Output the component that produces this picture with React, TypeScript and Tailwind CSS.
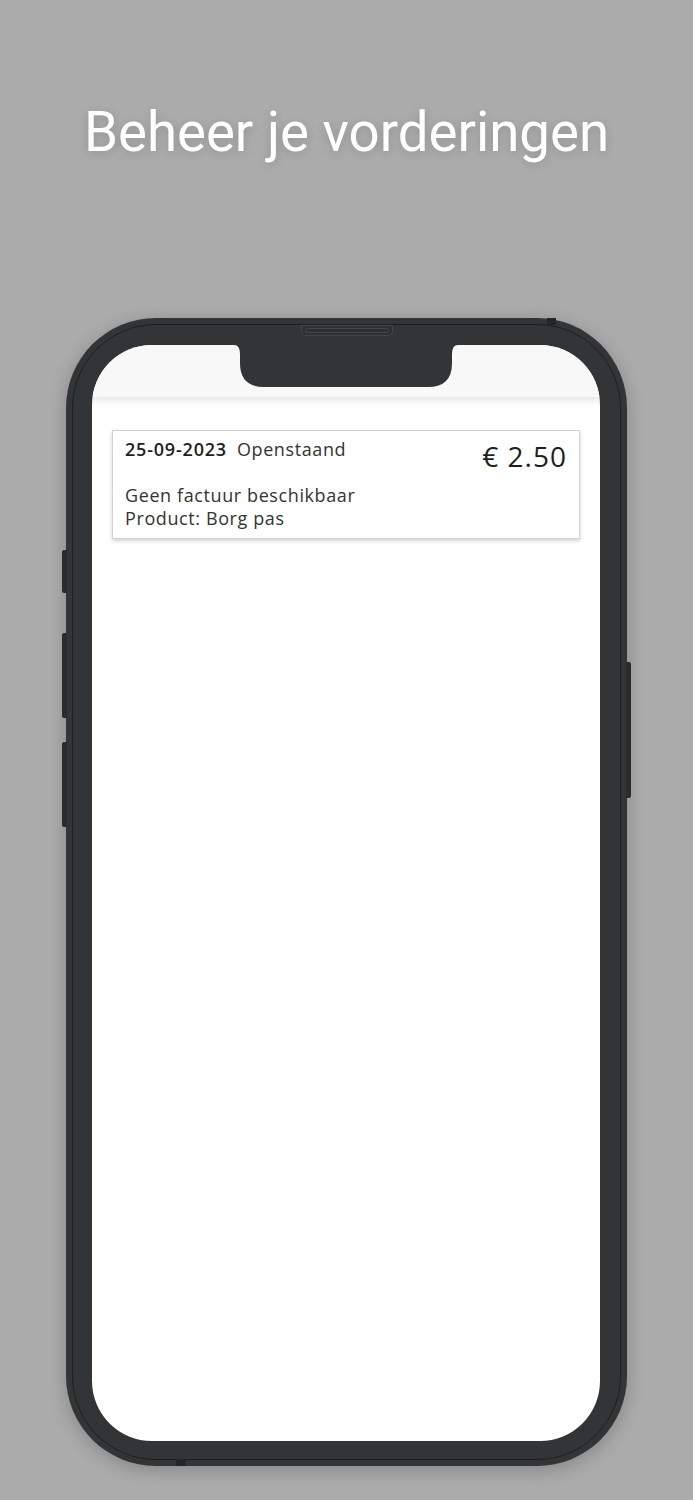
import React from 'react';

const SideButton = ({ className }: { className: string }) => (
  <div className={`absolute w-[5px] bg-[#2a2b2d] ${className}`} />
);

const Notch = () => (
  <svg className="absolute left-1/2 top-0 -translate-x-1/2" width="224" height="43" viewBox="0 0 224 43">
    <path d="M0 0 H224 Q218 0 218 9 V18 Q218 42 194 42 H30 Q6 42 6 18 V9 Q6 0 0 0 Z" fill="#333436" />
  </svg>
);

const Vordering: React.FC<{ datum: string; status: string; bedrag: string; regels: string[] }> = ({ datum, status, bedrag, regels }) => (
  <div className="mx-5 mt-[33px] border border-[#d2d2d2] bg-white px-[12px] pt-[6px] pb-[8px] shadow-[0_2px_4px_rgba(0,0,0,0.18)] font-['Open_Sans',sans-serif] tracking-[0.6px]">
    <div className="flex items-start justify-between">
      <div className="flex items-baseline gap-[10px] text-[18px] leading-[24px]">
        <span className="font-semibold tracking-[0.8px] text-[#1f1f1f]">{datum}</span>
        <span className="text-[#333]">{status}</span>
      </div>
      <span className="mt-[3px] text-[28px] leading-[32px] tracking-[1px] text-[#1f1f1f]">{bedrag}</span>
    </div>
    <div className="mt-[12px] text-[18px] leading-[23px] text-[#333]">
      {regels.map((r) => <div key={r}>{r}</div>)}
    </div>
  </div>
);

export default function App() {
  return (
    <div className="flex h-[1500px] w-full flex-col items-center bg-[#ababab] overflow-hidden">
      <h1 className="mt-[100px] font-['Roboto',sans-serif] text-[54.6px] leading-[64px] text-white [text-shadow:0_2px_10px_rgba(0,0,0,0.15)]">
        Beheer je vorderingen
      </h1>

      {/* telefoon */}
      <div className="relative mt-[154px] flex h-[1148px] w-[561px] flex-col rounded-[90px] bg-[#333436] pt-[27px] pr-[27px] pb-[25px] pl-[26px] shadow-[0_4px_18px_rgba(0,0,0,0.22)]">
        <div className="pointer-events-none absolute inset-[6px] rounded-[84px] border border-[#1e1f21]" />
        <SideButton className="-left-[4px] top-[232px] h-[43px] rounded-l-[2px]" />
        <SideButton className="-left-[4px] top-[315px] h-[85px] rounded-l-[2px]" />
        <SideButton className="-left-[4px] top-[424px] h-[85px] rounded-l-[2px]" />
        <SideButton className="-right-[4px] top-[344px] h-[136px] rounded-r-[2px]" />
        <div className="absolute left-[481px] top-0 h-[7px] w-[9px] bg-[#242527]" />
        <div className="absolute bottom-0 left-[110px] h-[7px] w-[10px] bg-[#242527]" />
        {/* speaker */}
        <div className="absolute left-1/2 top-[7px] h-[11px] w-[92px] -translate-x-1/2 rounded-b-[5px] border border-[#454648] bg-[#2e2f31]">
          <div className="mx-[3px] mt-[2px] h-[5px] rounded-full border border-[#444547]" />
        </div>

        <div className="relative flex-1 overflow-hidden rounded-[60px] bg-white">
          <div className="h-[52px] bg-[#f8f8f8] shadow-[0_3px_8px_rgba(0,0,0,0.12)]" />
          <Notch />
          <Vordering
            datum="25-09-2023"
            status="Openstaand"
            bedrag="€ 2.50"
            regels={['Geen factuur beschikbaar', 'Product: Borg pas']}
          />
        </div>
      </div>
    </div>
  );
}
